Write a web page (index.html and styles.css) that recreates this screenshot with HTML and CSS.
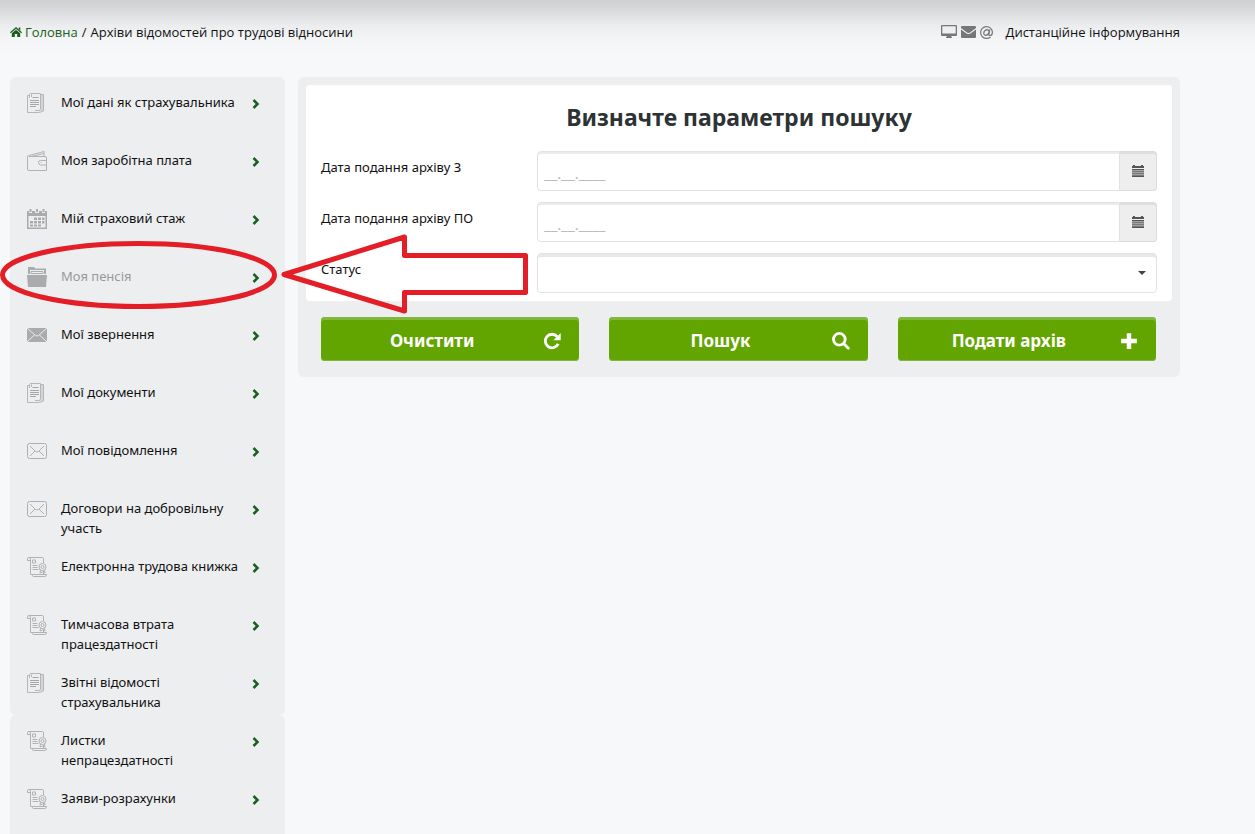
FILE: index.html
```html
<!DOCTYPE html>
<html lang="uk">
<head>
<meta charset="utf-8">
<meta name="viewport" content="width=device-width, initial-scale=1">
<title>Архіви відомостей про трудові відносини</title>
<link rel="stylesheet" href="styles.css">
</head>
<body>
<svg class="sprite" aria-hidden="true">
  <symbol id="docs" viewBox="0 0 20 20"><g fill="none" stroke="#b4b6b8"><path d="M3.500.5h10v15.500l-1 1.500H8M.5 2.500v17h12l4-1.500V1.500h-3M.5 2.500h2"/><path d="M15 2v15.500l-2.500 1.500" stroke="#cbcdcf" stroke-width="1.500"/><path d="M2.500 5V1.500q1-2 2 0v2.500"/><path d="M5.500 4.500h6M3 7.500h9M3 9.500h9M3 11.500h9M3 13.500h6" stroke="#a4a6a8"/></g></symbol>
  <symbol id="wallet" viewBox="0 0 20 20"><g fill="none" stroke="#b0b2b4"><path d="M2 5.500h16q1.500 0 1.500 1.500v12.500H2Q.5 19.500.5 18V6q0-1.500 1.500-1.500L17 .500v5M4 5.500l13-3"/><path d="M19.500 9.500h-6q-2 0-2 2t2 2.500h6"/><path d="M13.500 11.500h1"/></g></symbol>
  <symbol id="calendar" viewBox="0 0 20 20"><path fill="#a9abad" fill-rule="evenodd" d="M0 2h2v2h3V2h3v2h4V2h3v2h3V2h2v18H0zM1.500 7v11.500h17V7z"/><path fill="#a9abad" d="M2.500 0h2v3h-2zM9 0h2v3H9zM15.500 0h2v3h-2zM7 8.500h3v2.500H7zm4 0h3v2.500h-3zm4 0h2.500v2.500H15zM3 12h3v2.500H3zm4 0h3v2.500H7zm4 0h3v2.500h-3zm4 0h2.500v2.500H15zM3 15.500h3v2H3zm4 0h3v2H7zm4 0h3v2h-3z"/></symbol>
  <symbol id="folder" viewBox="0 0 20 20"><path fill="#a9abad" d="M0 8h20l-1 12H1z"/><path fill="#a9abad" fill-rule="evenodd" d="M1 0h6l1 1.500h11V7H1zm2 3v4h14V3z"/><path fill="none" stroke="#a9abad" d="M4 4.500h12v2H4z"/></symbol>
  <symbol id="mail-solid" viewBox="0 0 20 20"><path fill="#a9abad" d="M0 3h20v14H0z"/><path fill="none" stroke="#eceef0" d="m0 3 8.500 7.500q1.500 1 3 0L20 3M0 17l7.500-7M20 17l-7.500-7"/></symbol>
  <symbol id="mail" viewBox="0 0 20 20"><g fill="none" stroke="#adafb1"><rect x=".5" y="2.500" width="19" height="15" rx="2"/><path d="m3 5 5.500 5.500q1.500 1 3 0L17 5M3 15l5-5M17 15l-5-5"/></g></symbol>
  <symbol id="scroll" viewBox="0 0 20 20"><g fill="none" stroke="#b0b2b4"><path d="M3.500 3.500h-3v-2q0-1 1.500-1h13.500q1 0 1 1.500v4M2 .5q1.500 0 1.500 2v15h3M16.500 14v3.500M6.500 17.500h13v.5q0 1.500-2 1.500h-11q-1 0-1-1t1-1"/><path d="M5.500 3h3v3h-3zM5.500 8.500h5M5.500 10.500h5M5.500 12.500h6"/><circle cx="15.500" cy="10" r="3.500"/><circle cx="15.500" cy="10" r="1.500"/><path d="m13.500 13-.5 3 2.500-1 2.500 1-.5-3"/></g></symbol>
  <symbol id="chevron" viewBox="0 0 8 10"><path fill="none" stroke="#1b5e20" stroke-width="2.500" d="M1.500 1 5.500 5l-4 4"/></symbol>
  <symbol id="cal-small" viewBox="0 0 12 12"><path fill="#555" d="M0 1h1V0h2v1h6V0h2v1h1v2H0zM0 4h12v1.500H0zM0 6.200h12v1.300H0zM0 8.200h12v1.300H0zM0 10.200h12V12H0z"/></symbol>
</svg>

<header class="topbar">
  <nav class="crumbs" aria-label="Навігація">
    <a href="#"><svg class="home" viewBox="0 0 12 10" aria-hidden="true"><path fill="#1b5e20" d="M6 0 12 5.300l-.8.900L6 1.700.8 6.200 0 5.300zM8.700.5h1.600v3L8.700 2zM6 2.700l4.200 3.600V10H7.200V7H4.800v3h-3V6.300z"/></svg>Головна</a>
    <span>/</span>
    <span>Архіви відомостей про трудові відносини</span>
  </nav>
  <div class="remote">
    <svg class="ic-monitor" viewBox="0 0 16 14" aria-hidden="true"><path fill="#777" fill-rule="evenodd" d="M1 0h14q1 0 1 1v9q0 1-1 1h-5l1 1.500v.5H5v-.5L6 11H1q-1 0-1-1V1q0-1 1-1zm.3 1.300v7.200h13.400V1.300z"/></svg>
    <svg class="ic-mail" viewBox="0 0 15 12" aria-hidden="true"><path fill="#777" d="M0 1q0-1 1-1h13q1 0 1 1v1L9 6.500q-1.500 1-3 0L0 2zM0 3.500 5.500 7.500q2 1.200 4 0L15 3.500V11q0 1-1 1H1q-1 0-1-1z"/></svg>
    <svg class="ic-at" viewBox="0 0 13 13" aria-hidden="true"><path fill="none" stroke="#777" stroke-width="1.200" d="M10.500 11q-1.500 1.400-4 1.400a5.900 5.900 0 1 1 5.900-6.200Q12.300 9.500 10 9.500 8.500 9.500 9 8l.8-4.500M9.200 6Q9 3.700 7 3.700 4 4.300 3.700 7.300q.1 2 1.900 2Q8.200 9.200 9.200 6"/></svg>
    <a href="#">Дистанційне інформування</a>
  </div>
</header>

<div class="layout">
  <nav class="sidebar" aria-label="Меню">
    <ul class="menu">
      <li><a href="#"><svg class="ic"><use href="#docs"/></svg><span>Мої дані як страхувальника</span><svg class="go"><use href="#chevron"/></svg></a></li>
      <li><a href="#"><svg class="ic"><use href="#wallet"/></svg><span>Моя заробітна плата</span><svg class="go"><use href="#chevron"/></svg></a></li>
      <li><a href="#"><svg class="ic"><use href="#calendar"/></svg><span>Мій страховий стаж</span><svg class="go"><use href="#chevron"/></svg></a></li>
      <li><a href="#" class="current"><svg class="ic"><use href="#folder"/></svg><span>Моя пенсія</span><svg class="go"><use href="#chevron"/></svg></a></li>
      <li><a href="#"><svg class="ic"><use href="#mail-solid"/></svg><span>Мої звернення</span><svg class="go"><use href="#chevron"/></svg></a></li>
      <li><a href="#"><svg class="ic"><use href="#docs"/></svg><span>Мої документи</span><svg class="go"><use href="#chevron"/></svg></a></li>
      <li><a href="#"><svg class="ic"><use href="#mail"/></svg><span>Мої повідомлення</span><svg class="go"><use href="#chevron"/></svg></a></li>
      <li><a href="#"><svg class="ic"><use href="#mail"/></svg><span>Договори на добровільну участь</span><svg class="go"><use href="#chevron"/></svg></a></li>
      <li><a href="#"><svg class="ic"><use href="#scroll"/></svg><span>Електронна трудова книжка</span><svg class="go"><use href="#chevron"/></svg></a></li>
      <li><a href="#"><svg class="ic"><use href="#scroll"/></svg><span>Тимчасова втрата<br>працездатності</span><svg class="go"><use href="#chevron"/></svg></a></li>
      <li><a href="#"><svg class="ic"><use href="#docs"/></svg><span>Звітні відомості<br>страхувальника</span><svg class="go"><use href="#chevron"/></svg></a></li>
    </ul>
    <ul class="menu menu-last">
      <li><a href="#"><svg class="ic"><use href="#scroll"/></svg><span>Листки<br>непрацездатності</span><svg class="go"><use href="#chevron"/></svg></a></li>
      <li><a href="#"><svg class="ic"><use href="#scroll"/></svg><span>Заяви-розрахунки</span><svg class="go"><use href="#chevron"/></svg></a></li>
    </ul>
  </nav>

  <main>
    <form class="search">
      <div class="panel">
        <h1>Визначте параметри пошуку</h1>
        <div class="row">
          <label for="from">Дата подання архіву З</label>
          <div class="date"><input id="from" type="text" placeholder="__.__.____"><button type="button" aria-label="Календар"><svg><use href="#cal-small"/></svg></button></div>
        </div>
        <div class="row">
          <label for="to">Дата подання архіву ПО</label>
          <div class="date"><input id="to" type="text" placeholder="__.__.____"><button type="button" aria-label="Календар"><svg><use href="#cal-small"/></svg></button></div>
        </div>
        <div class="row">
          <label for="status">Статус</label>
          <div class="pick"><select id="status"><option></option></select><i class="caret"></i></div>
        </div>
      </div>
      <div class="actions">
        <button type="reset"><span>Очистити</span><svg viewBox="0 0 16 16" aria-hidden="true"><path fill="none" stroke="#fff" stroke-width="2.500" d="M13.500 10.500A6 6 0 1 1 12.500 4"/><path fill="#fff" d="M15.700.8v6.500H9.200z"/></svg></button>
        <button type="submit"><span>Пошук</span><svg viewBox="0 0 16 16" aria-hidden="true"><g fill="none" stroke="#fff" stroke-width="2.500"><circle cx="6.500" cy="6.500" r="5.200"/><path stroke-linecap="round" d="m10.500 10.500 4 4"/></g></svg></button>
        <button type="button"><span>Подати архів</span><svg viewBox="0 0 16 16" aria-hidden="true"><path fill="#fff" d="M6 1h4v5h5v4h-5v5H6v-5H1V6h5z"/></svg></button>
      </div>
    </form>
  </main>
</div>

<svg class="marks" width="530" height="320" viewBox="0 0 530 320" aria-hidden="true">
  <g fill="none" stroke="#e31e26" stroke-width="5">
    <ellipse cx="138.500" cy="275" rx="136" ry="31.500"/>
    <path stroke-linejoin="round" d="M284 274.500 404.500 237V255.500H525.500V292.500H404.500V311Z"/>
  </g>
</svg>
</body>
</html>
```

FILE: styles.css
```css
* { box-sizing: border-box; }

body {
  margin: 0;
  min-height: 100vh;
  display: flex;
  flex-direction: column;
  position: relative;
  font: 13px/20px "Noto Sans", "Open Sans", sans-serif;
  color: #111;
  background: #f7f8fa linear-gradient(#cfd0d2 0, #d3d4d6 5px, #e0e1e3 16px, #ecedef 26px, #f4f5f7 40px, #f7f8fa 54px) no-repeat 0 0 / 100% 54px;
}

.sprite { position: absolute; width: 0; height: 0; }

a { color: inherit; text-decoration: none; }

.topbar {
  display: flex;
  justify-content: space-between;
  align-items: flex-start;
  padding: 22px 75px 35px 10px;
  font-family: "Open Sans", "Noto Sans", sans-serif;
}

.crumbs { display: flex; gap: 4px; }
.crumbs a { display: flex; align-items: center; gap: 3px; color: #1b5e20; }
.home { width: 12px; height: 10px; }

.remote { display: flex; align-items: center; gap: 4px; }
.remote a { margin-left: 8px; }
.ic-monitor { width: 16px; height: 14px; }
.ic-mail { width: 15px; height: 12px; }
.ic-at { width: 13px; height: 13px; }

.layout {
  flex: 1;
  display: grid;
  grid-template-columns: 275px minmax(0, 1fr);
  column-gap: 13px;
  padding: 0 75px 0 10px;
}

.sidebar { display: flex; flex-direction: column; }

.menu {
  margin: 0;
  padding: 0;
  list-style: none;
  background: #edeef0;
  border-radius: 6px;
}
.menu-last { flex: 1; border-radius: 6px 6px 0 0; }

.menu a {
  display: grid;
  grid-template-columns: 24px 181px 8px;
  column-gap: 10px;
  align-items: start;
  min-height: 58px;
  padding: 15px 0 3px 17px;
}
.menu .current { color: #999; }
.ic { width: 20px; height: 20px; margin-top: 1px; }
.go { width: 8px; height: 10px; margin-top: 7px; }

.search {
  padding: 8px 8px 16px;
  background: #edeef0;
  border-radius: 6px;
}

.panel {
  display: flex;
  flex-direction: column;
  gap: 11px;
  padding: 16px 15px 8px;
  background: #fff;
  border-radius: 4px;
}

h1 {
  margin: 0 0 7px;
  font-size: 23px;
  font-weight: bold;
  line-height: 32px;
  text-align: center;
  color: #2d3234;
}

.row {
  display: grid;
  grid-template-columns: 216px minmax(0, 1fr);
}
.row label { position: relative; z-index: 1; padding-top: 6px; }

.date, .pick { display: flex; position: relative; }

input, select {
  flex: 1;
  min-width: 0;
  height: 40px;
  margin: 0;
  border: 1px solid #e2e2e2;
  border-radius: 4px;
  background: #fff;
  box-shadow: inset 0 2px 0 #ececec;
  font: inherit;
}
input { padding: 4px 6px 0; border-radius: 4px 0 0 4px; font-size: 15px; }
input::placeholder { color: #bbb; opacity: 1; }
select { appearance: none; box-shadow: inset 0 3px 0 #e8e8e8; }

.date button {
  display: flex;
  align-items: center;
  justify-content: center;
  width: 37px;
  padding: 0;
  border: 1px solid #dcdcdc;
  border-left: 0;
  border-radius: 0 4px 4px 0;
  background: #eee;
  box-shadow: inset 0 2px 0 #dedede;
}
.date svg { width: 12px; height: 12px; }

.caret {
  position: absolute;
  right: 11px;
  top: 18px;
  border: 4px solid transparent;
  border-top-color: #444;
  border-bottom: 0;
  pointer-events: none;
}

.actions {
  display: grid;
  grid-template-columns: repeat(3, minmax(0, 1fr));
  gap: 30px;
  padding: 16px 16px 0 15px;
}
.actions button {
  display: grid;
  grid-template-columns: 1fr 18px;
  align-items: center;
  height: 44px;
  padding: 3px 18px 0 0;
  border: 0;
  border-radius: 4px;
  background: #62a500;
  box-shadow: inset 0 3px 0 #80b73c, inset 0 -1px 0 #80b73c;
  color: #fff;
  font: bold 17px/24px "Noto Sans", "Open Sans", sans-serif;
}
.actions svg { width: 18px; height: 18px; }

.marks {
  position: absolute;
  left: 0;
  top: 0;
  pointer-events: none;
}
```
